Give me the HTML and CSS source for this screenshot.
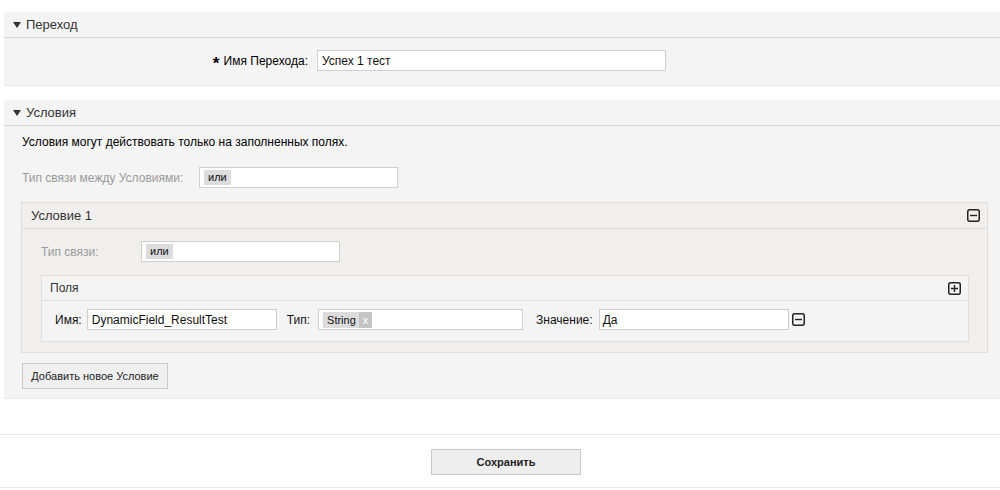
FILE: index.html
```html
<!DOCTYPE html>
<html lang="ru">
<head>
<meta charset="utf-8">
<link rel="stylesheet" href="styles.css">
</head>
<body>
<div class="widget w1">
  <div class="wh"><span class="tri"></span>Переход</div>
  <div class="wc c1">
    <div class="frow">
      <label class="lbl1"><span class="star">*</span> Имя Перехода:</label>
      <div class="inp inp1">Успех 1 тест</div>
    </div>
  </div>
</div>

<div class="widget w2">
  <div class="wh"><span class="tri"></span>Условия</div>
  <div class="wc c2">
    <p class="note">Условия могут действовать только на заполненных полях.</p>
    <div class="frow r2">
      <label class="lbl2 muted">Тип связи между Условиями:</label>
      <div class="inp inp2"><span class="chip">или</span></div>
    </div>

    <div class="cond">
      <div class="ch">
        <span>Условие 1</span>
        <svg class="ico" width="13" height="13" viewBox="0 0 13 13"><rect x="0.75" y="0.75" width="11.5" height="11.5" rx="2" fill="none" stroke="#222" stroke-width="1.5"/><path d="M3 6.5h7" stroke="#222" stroke-width="1.4"/></svg>
      </div>
      <div class="cc">
        <div class="frow r3">
          <label class="lbl3 muted">Тип связи:</label>
          <div class="inp inp2"><span class="chip">или</span></div>
        </div>
        <div class="fields">
          <div class="fh">
            <span>Поля</span>
            <svg class="ico" width="13" height="13" viewBox="0 0 13 13"><rect x="0.75" y="0.75" width="11.5" height="11.5" rx="2" fill="none" stroke="#222" stroke-width="1.5"/><path d="M3 6.5h7M6.5 3v7" stroke="#222" stroke-width="1.4"/></svg>
          </div>
          <div class="fc">
            <label class="fl">Имя:</label>
            <div class="inp inp-name">DynamicField_ResultTest</div>
            <label class="fl fl-type">Тип:</label>
            <div class="inp inp-type"><span class="chip2">String<span class="x">x</span></span></div>
            <label class="fl fl-val">Значение:</label>
            <div class="inp inp-val">Да</div>
            <svg class="ico ico-row" width="13" height="13" viewBox="0 0 13 13"><rect x="0.75" y="0.75" width="11.5" height="11.5" rx="2" fill="none" stroke="#222" stroke-width="1.5"/><path d="M3 6.5h7" stroke="#222" stroke-width="1.4"/></svg>
          </div>
        </div>
      </div>
    </div>

    <button class="btn add">Добавить новое Условие</button>
  </div>
</div>

<div class="footer">
  <button class="btn save">Сохранить</button>
</div>
</body>
</html>
```

FILE: styles.css
```css
* { box-sizing: border-box; }
html, body { margin: 0; padding: 0; background: #fff; }
body {
  font-family: "Liberation Sans", Arial, sans-serif;
  font-size: 12px;
  color: #000;
  padding-top: 12px;
}
.widget {
  margin-left: 4px;
  background: #f4f4f4;
  border-bottom: 1px solid #e8e8e8;
}
.w2 { margin-top: 14px; }
.wh {
  height: 26px;
  border-bottom: 1px solid #d8d8d8;
  font-size: 13px;
  color: #333;
  display: flex;
  align-items: center;
  padding-left: 9px;
}
.tri {
  width: 0; height: 0;
  border-left: 4.5px solid transparent;
  border-right: 4.5px solid transparent;
  border-top: 6px solid #333;
  margin-right: 5px;
  margin-top: 1px;
}
.c1 { height: 47px; padding-top: 12px; }
.frow { display: flex; align-items: center; }
.lbl1 {
  width: 304px;
  text-align: right;
  color: #000;
  margin-right: 9px;
}
.star {
  font-size: 17px;
  font-weight: bold;
  margin-right: 1px;
  position: relative;
  top: 4px;
  line-height: 10px;
}
.inp {
  height: 21px;
  background: #fff;
  border: 1px solid #cfcfcf;
  display: flex;
  align-items: center;
  padding-left: 4px;
  color: #111;
  font-size: 12px;
}
.inp1 { width: 349px; }
.c2 { padding: 9px 12px 9px 18px; }
.note { margin: 0; line-height: 15px; }
.r2 { margin-top: 17px; }
.lbl2 { width: 177px; }
.muted { color: #9a9a9a; }
.inp2 { width: 199px; padding-left: 4px; }
.chip {
  background: #dcdcdc;
  font-size: 11px;
  padding: 1px 4px 2px;
  color: #111;
}
.cond {
  margin-top: 14px;
  margin-left: -1px;
  border: 1px solid #dedede;
  background: #f0efed;
}
.ch {
  height: 26px;
  border-bottom: 1px solid #dedede;
  display: flex;
  align-items: center;
  justify-content: space-between;
  padding: 0 7px 0 9px;
  font-size: 13px;
  color: #333;
}
.ico { display: block; }
.cc { padding: 12px 18px 10px 19px; }
.lbl3 { width: 100px; }
.fields {
  margin-top: 13px;
  border: 1px solid #dedede;
  background: #f4f4f4;
}
.fh {
  height: 25px;
  border-bottom: 1px solid #dedede;
  display: flex;
  align-items: center;
  justify-content: space-between;
  padding: 0 7px 0 8px;
  font-size: 12px;
  color: #333;
}
.fc {
  display: flex;
  align-items: center;
  padding: 8px 0 11px 13px;
}
.fl { color: #111; margin-right: 5px; }
.inp-name { width: 190px; }
.fl-type { margin-left: 10px; margin-right: 8px; }
.inp-type { width: 205px; padding-left: 4px; }
.chip2 {
  background: #dcdcdc;
  font-size: 11px;
  padding: 0 0 0 4px;
  display: flex;
  align-items: center;
  height: 16px;
  color: #111;
}
.x {
  background: #c4c4c4;
  color: #fff;
  margin-left: 3px;
  padding: 0 4px;
  height: 16px;
  line-height: 16px;
  font-size: 11px;
}
.fl-val { margin-left: 13px; margin-right: 6px; }
.inp-val { width: 190px; padding-left: 3px; }
.ico-row { margin-left: 3px; }
.btn {
  font-family: "Liberation Sans", Arial, sans-serif;
  font-size: 11px;
  color: #222;
  background: #efefef;
  border: 1px solid #c9c9c9;
  padding: 0;
  cursor: pointer;
}
.add {
  margin-top: 10px;
  height: 26px;
  width: 146px;
  display: block;
}
.footer {
  margin-top: 35px;
  border-top: 1px solid #e8e8e8;
  border-bottom: 1px solid #e8e8e8;
  height: 54px;
  display: flex;
  justify-content: center;
  padding-top: 14px;
}
.save {
  width: 150px;
  height: 26px;
  font-weight: bold;
  background: #eeeeee;
  margin-left: 12px;
}
```
